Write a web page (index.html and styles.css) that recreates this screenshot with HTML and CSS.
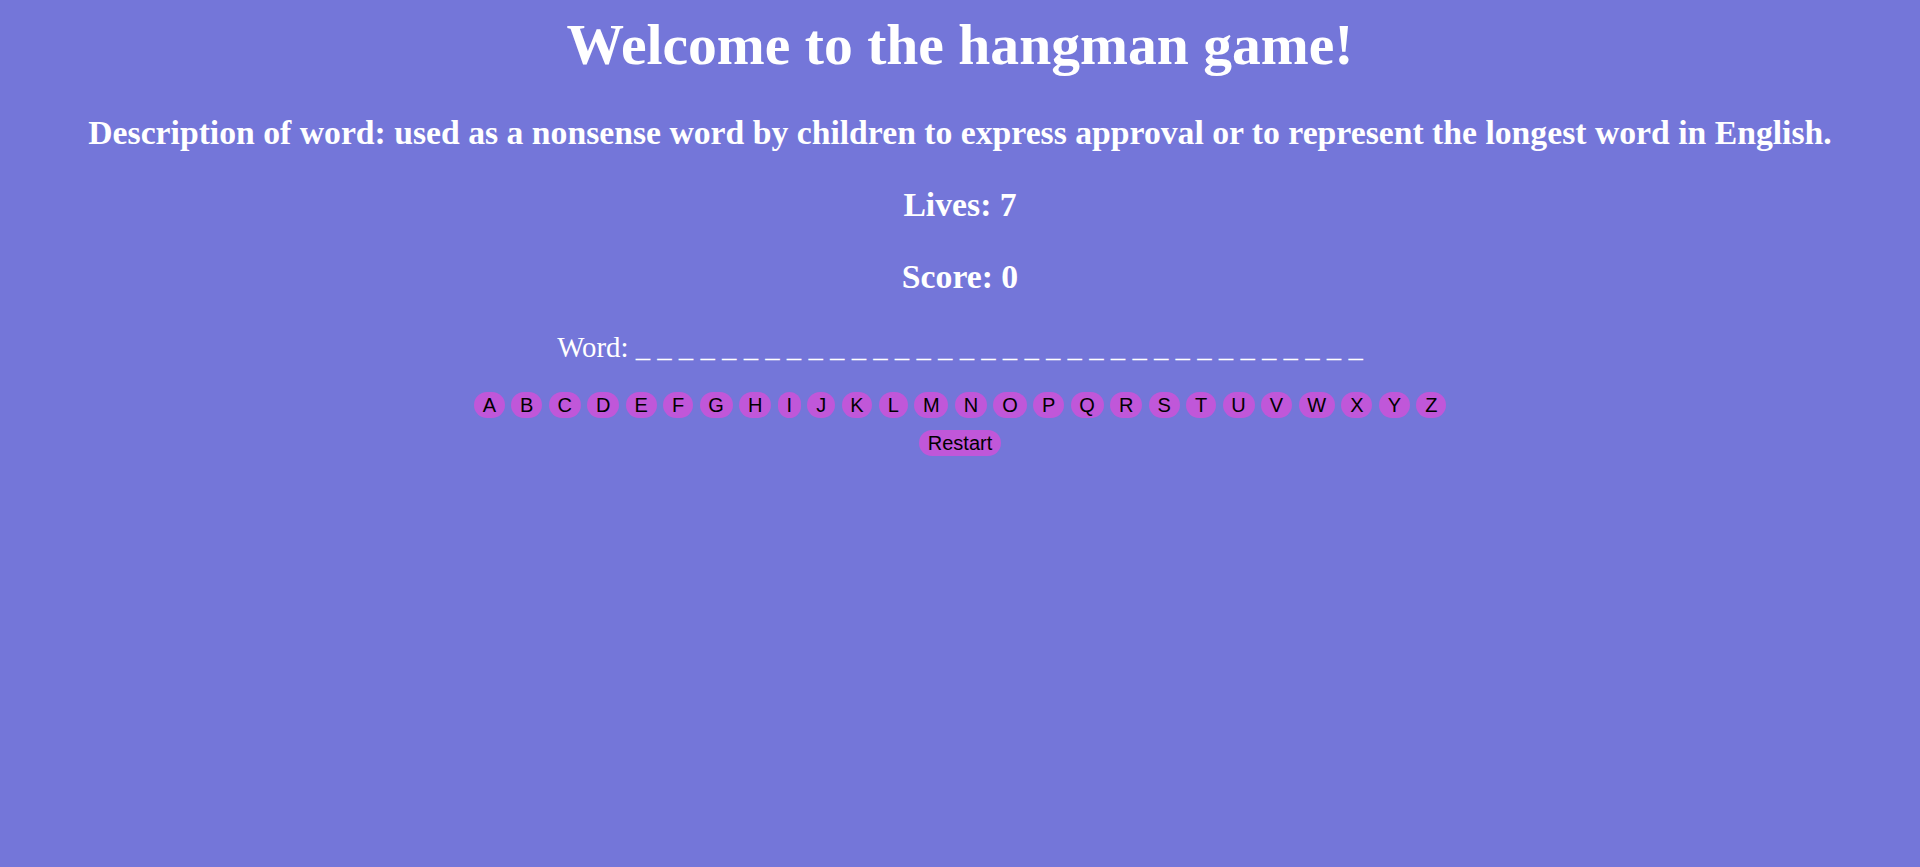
FILE: index.html
```html
<!DOCTYPE html>
<html lang="en">
<head>
<meta charset="utf-8">
<title>Hangman</title>
<link rel="stylesheet" href="styles.css">
</head>
<body>
<main class="game">
  <h1 class="title">Welcome to the hangman game!</h1>
  <p class="info">Description of word: used as a nonsense word by children to express approval or to represent the longest word in English.</p>
  <p class="info">Lives: 7</p>
  <p class="info">Score: 0</p>
  <p class="word">Word: _ _ _ _ _ _ _ _ _ _ _ _ _ _ _ _ _ _ _ _ _ _ _ _ _ _ _ _ _ _ _ _ _ _</p>
  <div class="letters">
    <button class="btn">A</button><button class="btn">B</button><button class="btn">C</button><button class="btn">D</button><button class="btn">E</button><button class="btn">F</button><button class="btn">G</button><button class="btn">H</button><button class="btn">I</button><button class="btn">J</button><button class="btn">K</button><button class="btn">L</button><button class="btn">M</button><button class="btn">N</button><button class="btn">O</button><button class="btn">P</button><button class="btn">Q</button><button class="btn">R</button><button class="btn">S</button><button class="btn">T</button><button class="btn">U</button><button class="btn">V</button><button class="btn">W</button><button class="btn">X</button><button class="btn">Y</button><button class="btn">Z</button>
  </div>
  <div class="controls">
    <button class="btn">Restart</button>
  </div>
</main>
</body>
</html>
```
FILE: styles.css
```css
html, body {
  margin: 0;
  padding: 0;
  height: 100%;
}

body {
  background: #7476d9;
  color: #ffffff;
  font-family: "Liberation Serif", "Times New Roman", serif;
  text-align: center;
}

.game {
  display: flex;
  flex-direction: column;
  align-items: center;
  padding-top: 12px;
}

.title {
  font-size: 57.6px;
  font-weight: bold;
  line-height: 66px;
  margin: 0 0 36px;
}

.info {
  font-size: 33.7px;
  font-weight: bold;
  line-height: 38.6px;
  margin: 0 0 33.6px;
}

.word {
  font-size: 28.8px;
  line-height: 33px;
  margin: 0 0 28.6px;
}

.letters {
  display: flex;
  justify-content: center;
  gap: 6.5px;
}

.controls {
  display: flex;
  justify-content: center;
  margin-top: 12.3px;
}

.btn {
  font-family: "Liberation Sans", Arial, sans-serif;
  font-size: 20px;
  line-height: 22px;
  color: #000000;
  background: #c057d9;
  border: none;
  border-radius: 13px;
  padding: 2px 8.8px;
  margin: 0;
  cursor: pointer;
}
```
